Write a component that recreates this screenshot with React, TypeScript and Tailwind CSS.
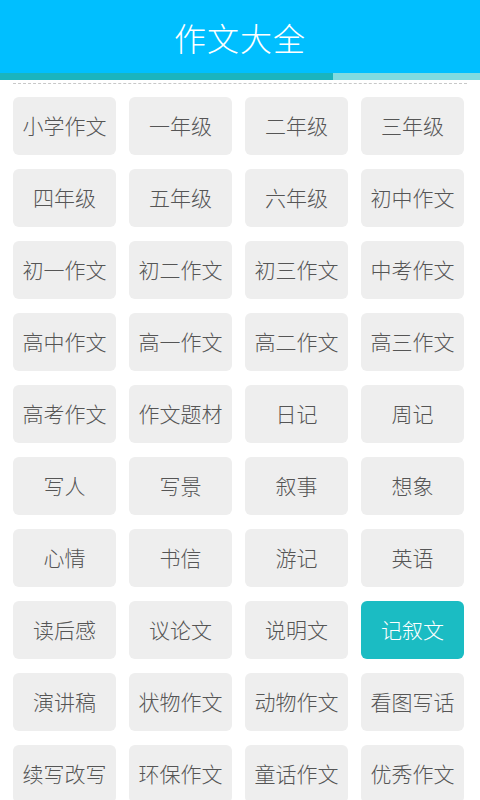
const ITEMS = [
  "小学作文", "一年级", "二年级", "三年级",
  "四年级", "五年级", "六年级", "初中作文",
  "初一作文", "初二作文", "初三作文", "中考作文",
  "高中作文", "高一作文", "高二作文", "高三作文",
  "高考作文", "作文题材", "日记", "周记",
  "写人", "写景", "叙事", "想象",
  "心情", "书信", "游记", "英语",
  "读后感", "议论文", "说明文", "记叙文",
  "演讲稿", "状物作文", "动物作文", "看图写话",
  "续写改写", "环保作文", "童话作文", "优秀作文",
];

const SELECTED = "记叙文";

export default function App() {
  return (
    <div
      className="w-[480px] h-[800px] overflow-hidden bg-white"
      style={{ fontFamily: '"Noto Sans CJK SC", "Noto Sans", sans-serif' }}
    >
      <header className="h-[73px] bg-[#00bfff] flex items-center justify-center">
        <h1 className="text-white text-[32px] leading-none font-light tracking-[1px]">作文大全</h1>
      </header>
      <div className="flex h-[7px]">
        <div className="w-[333px] bg-[#1ab4be]" />
        <div className="flex-1 bg-[#80dbe0]" />
      </div>
      <div className="mx-[13px] mt-[3px] border-t-[1.5px] border-dashed border-[#c8c8c8]" />
      <div className="grid grid-cols-4 gap-x-[13px] gap-y-[14px] pl-[13px] pr-[16px] pt-[13px]">
        {ITEMS.map(item => (
          <button
            key={item}
            className={`h-[58px] rounded-[6px] flex items-center justify-center text-[21px] font-light ${
              item === SELECTED ? "bg-[#1bbcc3] text-white" : "bg-[#eeeeee] text-[#555555]"
            }`}
          >
            {item}
          </button>
        ))}
      </div>
    </div>
  );
}
